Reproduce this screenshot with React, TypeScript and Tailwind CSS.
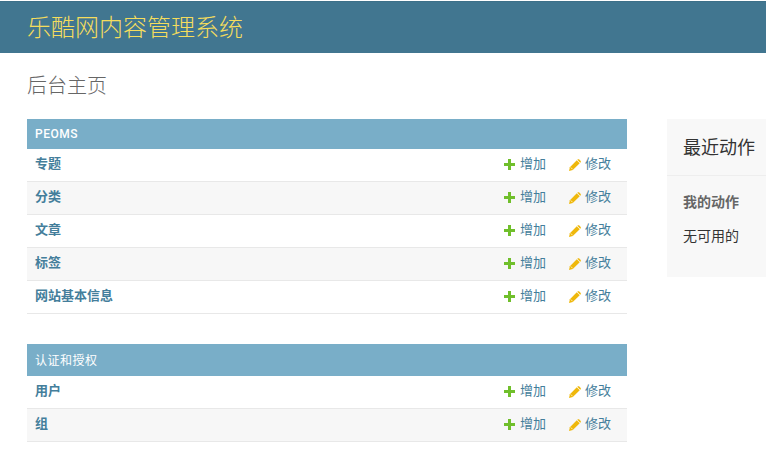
import React from 'react';

const MODULES = [
    { title: 'PEOMS', head: 'h-[30px] font-medium', rows: ['专题', '分类', '文章', '标签', '网站基本信息'] },
    { title: '认证和授权', head: 'h-[32px] pt-[2px] font-normal', rows: ['用户', '组'] },
];

const PlusIcon = () => (
    <svg className="w-[11px] h-[11px] shrink-0 mt-px" viewBox="0 0 11 11">
        <path d="M4 0h3v4h4v3H7v4H4V7H0V4h4z" fill="#70bf2b" />
    </svg>
);

const PencilIcon = () => (
    <svg className="w-[12px] h-[12px] shrink-0 mt-px" viewBox="0 0 12 12">
        <path d="M0 12l.9-3.8L7.8 1.3l2.9 2.9-6.9 6.9z" fill="#efb80b" />
        <path d="M8.6.5c.5-.5 1.2-.5 1.7 0l1.2 1.2c.5.5.5 1.2 0 1.7l-.3.3L8.3.8z" fill="#efb80b" />
        <path d="M1.7 8.4l1.9 1.9" stroke="#fff" strokeWidth="0.7" />
    </svg>
);

export default function App() {
    return (
        <div className="w-[766px] h-[455px] overflow-hidden bg-white font-['Roboto','Noto_Sans_CJK_SC',sans-serif] text-[13px] text-[#333]">
            {/* Header */}
            <div className="mt-px h-[52px] bg-[#417690] pl-[27px] flex items-center border-t border-[#3d7089]">
                <span className="text-[24px] font-light text-[#f5dd5d] leading-none">乐酷网内容管理系统</span>
            </div>

            <h1 className="ml-[27px] mt-[19px] h-[47px] text-[20px] leading-[28px] font-light text-[#666]">后台主页</h1>

            <div className="flex pl-[27px] gap-[40px]">
                <div className="w-[600px] shrink-0 flex flex-col gap-[30px]">
                    {MODULES.map(mod => (
                        <div key={mod.title}>
                            <div className={`${mod.head} bg-[#79aec8] px-2 flex items-center text-[12px] tracking-[0.5px] text-white`}>
                                {mod.title}
                            </div>
                            {mod.rows.map((row, i) => (
                                <div
                                    key={row}
                                    className={`h-[33px] flex items-center border-b border-[#e8e8e8] pl-2 pr-[16px] pb-[2px] ${i % 2 === 1 ? 'bg-[#f7f7f7]' : 'bg-white'}`}
                                >
                                    <span className="font-bold text-[#447e9b]">{row}</span>
                                    <span className="ml-auto flex items-center gap-[5px] text-[#447e9b]">
                                        <PlusIcon />
                                        增加
                                    </span>
                                    <span className="ml-[23px] flex items-center gap-[4px] text-[#447e9b]">
                                        <PencilIcon />
                                        修改
                                    </span>
                                </div>
                            ))}
                        </div>
                    ))}
                </div>

                {/* Recent actions */}
                <div className="w-[99px] h-[158px] shrink-0 bg-[#f8f8f8]">
                    <div className="h-[57px] border-b border-[#eeeeee] pl-4 flex items-center text-[18px] whitespace-nowrap text-[#333]">最近动作</div>
                    <div className="pl-4 pt-[16px] text-[14px] font-bold text-[#666] leading-[20px] whitespace-nowrap">我的动作</div>
                    <div className="pl-4 pt-[14px] text-[14px] text-[#333] leading-[20px] whitespace-nowrap">无可用的</div>
                </div>
            </div>
        </div>
    );
}
